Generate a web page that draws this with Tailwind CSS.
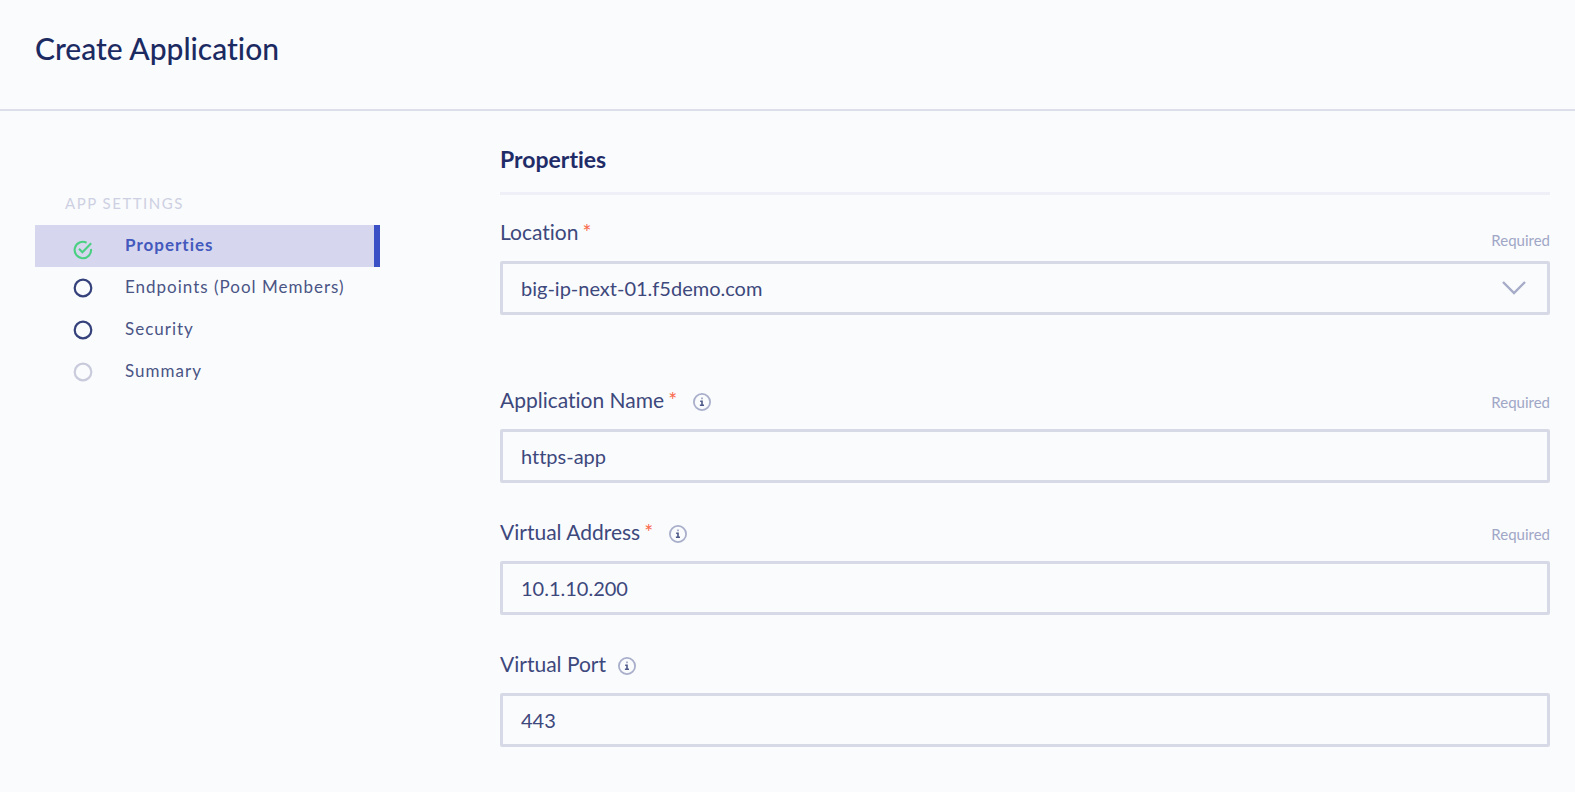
<!DOCTYPE html>
<html lang="en">
<head>
<meta charset="utf-8">
<meta name="viewport" content="width=device-width, initial-scale=1">
<title>Create Application</title>
<script src="https://cdn.jsdelivr.net/npm/@tailwindcss/browser@4"></script>
</head>
<body class="min-h-screen bg-[#fafbfd] font-['Lato',sans-serif] text-[#3d487c] [font-variant-ligatures:none]">
<svg class="hidden" aria-hidden="true">
  <symbol id="info" viewBox="0 0 18 18">
    <circle cx="9" cy="9" r="8.1" fill="none" stroke="#a9afcb" stroke-width="1.8"/>
    <path d="M8 4.4h2v1.8H8z" fill="#a9afcb"/>
    <path d="M7.2 7.6h2.6v4h1.2v1.4H6.9v-1.4h1.3V9h-1z" fill="#4c5888"/>
  </symbol>
</svg>
<header class="flex h-[111px] items-start border-b-2 border-[#dcdeea] px-[35px] pt-7">
  <h1 class="text-[30px] leading-10 font-medium text-[#1c2a62]">Create Application</h1>
</header>
<div class="flex">
  <nav class="w-[380px] shrink-0 pt-[82px] pl-[35px]" aria-label="App settings">
    <h2 class="h-8 pl-[30px] text-[15px] leading-5 tracking-widest text-[#cdd0e2]">APP SETTINGS</h2>
    <ul class="text-[17px] tracking-[1px] text-[#4a5585]">
      <li><a href="#properties" aria-current="step" class="flex h-[42px] items-center gap-8 border-r-6 border-[#3a50c4] bg-[#d6d7ee] pl-[38px] font-bold text-[#4459bd]">
        <svg class="mt-2 size-5" viewBox="0 0 20 20" fill="none" stroke="#4bd083" stroke-width="2.1" aria-hidden="true"><path d="M13.6 2.7A8.2 8.2 0 1 0 18 9"/><path d="M6 8.8 9.4 12.2 18.2 3.2"/></svg>
        <span class="pb-0.5">Properties</span></a></li>
      <li><a href="#endpoints" class="flex h-[42px] items-center gap-8 pl-[38px]">
        <svg class="size-5" viewBox="0 0 20 20" fill="none" stroke="#34417a" stroke-width="2.2" aria-hidden="true"><circle cx="10" cy="10" r="8.3"/></svg>
        <span class="pb-0.5">Endpoints (Pool Members)</span></a></li>
      <li><a href="#security" class="flex h-[42px] items-center gap-8 pl-[38px]">
        <svg class="size-5" viewBox="0 0 20 20" fill="none" stroke="#34417a" stroke-width="2.2" aria-hidden="true"><circle cx="10" cy="10" r="8.3"/></svg>
        <span class="pb-0.5">Security</span></a></li>
      <li><a href="#summary" class="flex h-[42px] items-center gap-8 pl-[38px]">
        <svg class="size-5" viewBox="0 0 20 20" fill="none" stroke="#c9cbdc" stroke-width="2.2" aria-hidden="true"><circle cx="10" cy="10" r="8.3"/></svg>
        <span class="pb-0.5">Summary</span></a></li>
    </ul>
  </nav>
  <main class="min-w-0 flex-1 pt-8 pr-[25px] pb-11 pl-[120px]">
    <h2 id="properties" class="h-[52px] border-b-3 border-[#eff0f7] text-[23px] leading-8 font-bold text-[#1f2c68]">Properties</h2>
    <form class="text-[21px]">
      <div class="mb-[60px]">
        <div class="flex h-[66px] items-start justify-between pt-[21px] leading-8">
          <label for="location">Location<span class="ml-1 text-[#f9694c]">*</span></label>
          <span class="pt-2 text-[15px] text-[#a0a7c6]">Required</span>
        </div>
        <div class="relative">
          <select id="location" class="h-[54px] w-full appearance-none rounded-xs border-3 border-[#d7dae6] bg-transparent px-[18px] text-[20px]"><option>big-ip-next-01.f5demo.com</option></select>
          <svg class="pointer-events-none absolute top-5 right-6 h-[14px] w-6" viewBox="0 0 24 14" fill="none" stroke="#a6acc8" stroke-width="2.4" aria-hidden="true"><path d="M1 1 12 12 23 1"/></svg>
        </div>
      </div>
      <div class="mb-6">
        <div class="flex h-[54px] items-start justify-between pt-[9px] leading-8">
          <div class="flex items-center gap-4"><label for="name">Application Name<span class="ml-1 text-[#f9694c]">*</span></label>
            <button type="button" class="pt-1" aria-label="About application name"><svg class="size-[18px]"><use href="#info"/></svg></button></div>
          <span class="pt-0.5 text-[15px] text-[#a0a7c6]">Required</span>
        </div>
        <input id="name" value="https-app" class="h-[54px] w-full rounded-xs border-3 border-[#d7dae6] px-[18px] text-[20px]">
      </div>
      <div class="mb-6">
        <div class="flex h-[54px] items-start justify-between pt-[9px] leading-8">
          <div class="flex items-center gap-4"><label for="address">Virtual Address<span class="ml-1 text-[#f9694c]">*</span></label>
            <button type="button" class="pt-1" aria-label="About virtual address"><svg class="size-[18px]"><use href="#info"/></svg></button></div>
          <span class="pt-0.5 text-[15px] text-[#a0a7c6]">Required</span>
        </div>
        <input id="address" value="10.1.10.200" class="h-[54px] w-full rounded-xs border-3 border-[#d7dae6] px-[18px] text-[20px]">
      </div>
      <div>
        <div class="flex h-[54px] items-start justify-between pt-[9px] leading-8">
          <div class="flex items-center gap-3"><label for="port">Virtual Port</label>
            <button type="button" class="pt-1" aria-label="About virtual port"><svg class="size-[18px]"><use href="#info"/></svg></button></div>
        </div>
        <input id="port" value="443" class="h-[54px] w-full rounded-xs border-3 border-[#d7dae6] px-[18px] text-[20px]">
      </div>
    </form>
  </main>
</div>
</body>
</html>
